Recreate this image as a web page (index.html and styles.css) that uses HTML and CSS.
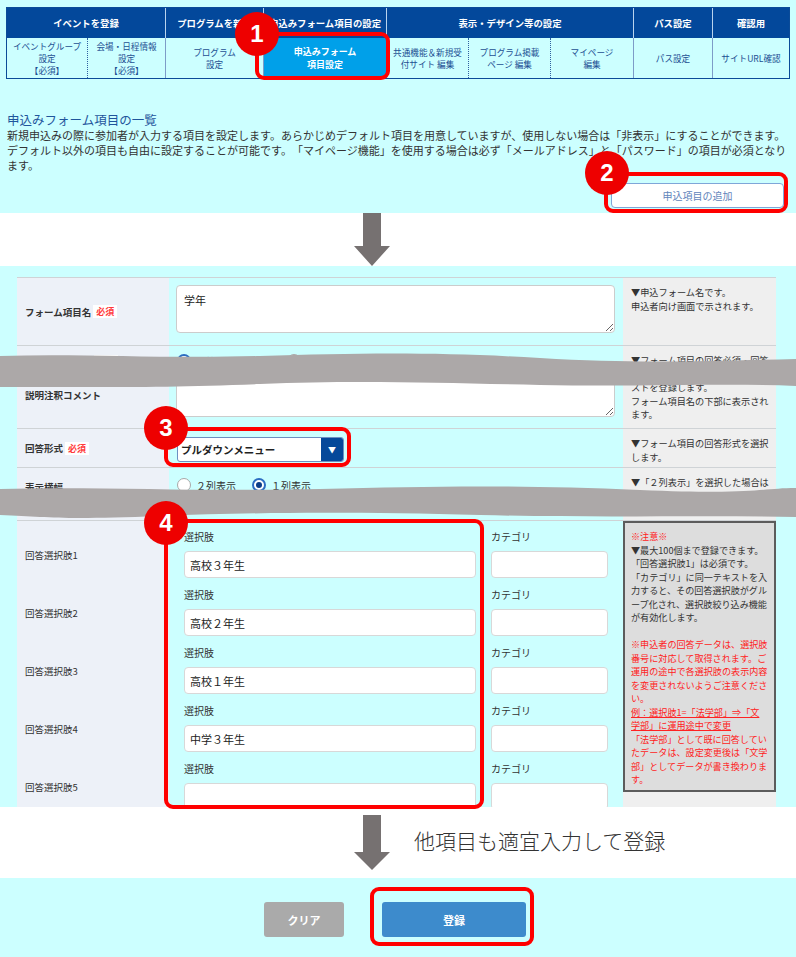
FILE: index.html
```html
<!doctype html>
<html lang="ja">
	<head>
		<meta charset="utf-8">
		<link rel="stylesheet" href="styles.css">
		<title>申込みフォーム項目の設定</title>
	</head>
	<body>
	<div class="page">

		<section class="top">
			<div class="steps">
				<div class="step-head span2">イベントを登録</div>
				<div class="step-head">プログラムを新規</div>
				<div class="step-head">申込みフォーム項目の設定</div>
				<div class="step-head span3">表示・デザイン等の設定</div>
				<div class="step-head">パス設定</div>
				<div class="step-head">確認用</div>

				<div class="step first">イベントグループ<br>設定<br>【必須】</div>
				<div class="step">会場・日程情報<br>設定<br>【必須】</div>
				<div class="step group">プログラム<br>設定</div>
				<div class="step group active">申込みフォーム<br>項目設定</div>
				<div class="step group">共通機能＆新規受<br>付サイト 編集</div>
				<div class="step">プログラム掲載<br>ページ 編集</div>
				<div class="step">マイページ<br>編集</div>
				<div class="step group">パス設定</div>
				<div class="step group">サイトURL確認</div>
			</div>

			<h2 class="list-title">申込みフォーム項目の一覧</h2>
			<p class="list-desc">新規申込みの際に参加者が入力する項目を設定します。あらかじめデフォルト項目を用意していますが、使用しない場合は「非表示」にすることができます。<br>デフォルト以外の項目も自由に設定することが可能です。「マイページ機能」を使用する場合は必ず「メールアドレス」と「パスワード」の項目が必須となります。</p>
			<div class="add-row"><button class="btn-add">申込項目の追加</button></div>
		</section>

		<div class="arrow-band">
			<svg class="arrow" width="36" height="53" viewBox="0 0 36 53"><path d="M9 0H27V33H36L18 53L0 33H9Z" fill="#767171"/></svg>
		</div>

		<section class="form-area">
			<div class="form-table">

				<div class="row row-name">
					<div class="cell-label">フォーム項目名<span class="req">必須</span></div>
					<div class="cell-input pad-name"><textarea class="ta ta-name">学年</textarea></div>
					<div class="cell-help">▼申込フォーム名です。<br>申込者向け画面で示されます。</div>
				</div>

				<div class="row row-comment">
					<div class="cell-label label-stack">
						<div class="label-line">回答の必須設定<span class="req">必須</span></div>
						<div class="label-line label-second">説明注釈コメント</div>
					</div>
					<div class="cell-input pad-comment">
						<div class="radios">
							<span class="radio-item wide"><span class="radio on"></span>回答必須</span>
							<span class="radio-item"><span class="radio"></span>回答任意</span>
						</div>
						<textarea class="ta ta-comment"></textarea>
					</div>
					<div class="cell-help">▼フォーム項目の回答必須・回答<br>任意を選択します。説明注釈テキ<br>ストを登録します。<br>フォーム項目名の下部に表示され<br>ます。</div>
				</div>

				<div class="row row-type">
					<div class="cell-label">回答形式<span class="req">必須</span></div>
					<div class="cell-input pad-type">
						<div class="select"><span class="select-text">プルダウンメニュー</span><span class="select-arrow">▼</span></div>
					</div>
					<div class="cell-help">▼フォーム項目の回答形式を選択<br>します。</div>
				</div>

				<div class="row row-width">
					<div class="cell-label label-top">表示横幅</div>
					<div class="cell-input pad-width">
						<div class="radios">
							<span class="radio-item"><span class="radio"></span>２列表示</span>
							<span class="radio-item"><span class="radio on"></span>１列表示</span>
						</div>
					</div>
					<div class="cell-help">▼「２列表示」を選択した場合は<br>横に並べて表示されます。</div>
				</div>

				<div class="row row-choices">
					<div class="cell-label choice-labels">
						<div class="choice-label">回答選択肢1</div>
						<div class="choice-label">回答選択肢2</div>
						<div class="choice-label">回答選択肢3</div>
						<div class="choice-label">回答選択肢4</div>
						<div class="choice-label">回答選択肢5</div>
					</div>
					<div class="cell-input choices">
						<div class="choice">
							<div><div class="field-label">選択肢</div><input class="txt" type="text" value="高校３年生"></div>
							<div><div class="field-label">カテゴリ</div><input class="txt" type="text" value=""></div>
						</div>
						<div class="choice">
							<div><div class="field-label">選択肢</div><input class="txt" type="text" value="高校２年生"></div>
							<div><div class="field-label">カテゴリ</div><input class="txt" type="text" value=""></div>
						</div>
						<div class="choice">
							<div><div class="field-label">選択肢</div><input class="txt" type="text" value="高校１年生"></div>
							<div><div class="field-label">カテゴリ</div><input class="txt" type="text" value=""></div>
						</div>
						<div class="choice">
							<div><div class="field-label">選択肢</div><input class="txt" type="text" value="中学３年生"></div>
							<div><div class="field-label">カテゴリ</div><input class="txt" type="text" value=""></div>
						</div>
						<div class="choice">
							<div><div class="field-label">選択肢</div><input class="txt" type="text" value=""></div>
							<div><div class="field-label">カテゴリ</div><input class="txt" type="text" value=""></div>
						</div>
					</div>
					<div class="cell-help help-notice">
						<div class="notice"><span class="red">※注意※</span><br>▼最大100個まで登録できます。<br>「回答選択肢1」は必須です。<br>「カテゴリ」に同一テキストを入<br>力すると、その回答選択肢がグル<br>ープ化され、選択肢絞り込み機能<br>が有効化します。<br><br><span class="red">※申込者の回答データは、選択肢<br>番号に対応して取得されます。ご<br>運用の途中で各選択肢の表示内容<br>を変更されないようご注意くださ<br>い。<br><u>例：選択肢1=「法学部」⇒「文<br>学部」に運用途中で変更</u><br>「法学部」として既に回答してい<br>たデータは、設定変更後は「文学<br>部」としてデータが書き換わりま<br>す。</span></div>
					</div>
				</div>

			</div>
		</section>

		<div class="next-band">
			<svg class="arrow" width="36" height="55" viewBox="0 0 36 55"><path d="M9 0H27V37H36L18 55L0 37H9Z" fill="#767171"/></svg>
			<span class="next-text">他項目も適宜入力して登録</span>
		</div>

		<section class="actions">
			<button class="btn btn-clear">クリア</button>
			<button class="btn btn-submit">登録</button>
		</section>

		<!-- 省略を表す波線 -->
		<svg class="wave wave-1" width="796" height="40" viewBox="0 0 796 40"><path d="M0 6C80 3 160 9 260 6S440 2 540 8S700 11 796 9L796 36C720 33 640 37 540 35S360 30 260 34S90 37 0 37Z" fill="#aca8a8"/></svg>
		<svg class="wave wave-2" width="796" height="40" viewBox="0 0 796 40"><path d="M0 7C90 4 200 10 320 7S520 3 640 8S760 6 796 6L796 35C700 33 600 36 480 33S260 30 160 34S50 35 0 33Z" fill="#aca8a8"/></svg>

		<!-- 注釈の枠と番号 -->
		<div class="mark mark-1"></div>
		<div class="mark mark-2"></div>
		<div class="mark mark-3"></div>
		<div class="mark mark-4"></div>
		<div class="mark mark-5"></div>
		<div class="badge badge-1">1</div>
		<div class="badge badge-2">2</div>
		<div class="badge badge-3">3</div>
		<div class="badge badge-4">4</div>

	</div>
	</body>
</html>
```

FILE: styles.css
```css
* {
	box-sizing: border-box;
}

body {
	background: #fff;
	color: #333;
	font-family: "Noto Sans CJK JP", "Noto Sans", sans-serif;
	margin: 0;
	text-spacing-trim: space-all;
}

.page {
	position: relative;
	width: 796px;
}

/* 上部：ステップナビと説明 */
.top {
	background: #ccffff;
	padding: 7px 6px 5px 6px;
}

.steps {
	border: 1px solid #0b4b98;
	display: grid;
	grid-template-columns: 80px 78px 98px 123px 82px 82px 83px 79px 77px;
	grid-template-rows: 30px 40px;
}

.step-head {
	align-items: center;
	background: #03489b;
	border-left: 1px solid #b9d3ee;
	color: #fff;
	display: flex;
	font-size: 9.4px;
	font-weight: bold;
	justify-content: center;
	white-space: nowrap;
}

.step-head:first-child {
	border-left: 0;
}

.span2 {
	grid-column: span 2;
}

.span3 {
	grid-column: span 3;
}

.step {
	align-items: center;
	border-left: 1px dotted #2f5f9f;
	color: #1d4f93;
	display: flex;
	font-size: 8.6px;
	justify-content: center;
	line-height: 12px;
	text-align: center;
}

.step.first {
	border-left: 0;
}

.step.group {
	border-left: 1px solid #7d9cc8;
}

.step.active {
	background: #00a0e9;
	color: #fff;
	font-size: 9px;
	font-weight: bold;
	line-height: 13px;
}

.list-title {
	color: #1f559c;
	font-size: 12.5px;
	font-weight: normal;
	line-height: 16px;
	margin: 33px 0 0 1px;
}

.list-desc {
	font-size: 11px;
	line-height: 15px;
	margin: 0 0 0 1px;
}

.add-row {
	display: flex;
	justify-content: flex-end;
	margin-top: 10px;
	padding-right: 6px;
}

.btn-add {
	background: #fff;
	border: 1px solid #7fa6d8;
	border-radius: 4px;
	color: #5f84bb;
	font-family: "Noto Sans CJK JP", sans-serif;
	font-size: 10px;
	height: 25px;
	width: 173px;
}

/* 矢印の帯 */
.arrow-band {
	height: 53px;
	padding-left: 354px;
}

.arrow {
	display: block;
}

.next-band {
	align-items: center;
	display: flex;
	gap: 24px;
	height: 71px;
	padding-left: 354px;
}

.next-text {
	color: #333;
	font-size: 21px;
	font-weight: 300;
	margin-bottom: 6px;
}

/* フォーム項目 */
.form-area {
	background: #ccffff;
	height: 541px;
	overflow: hidden;
	padding: 11px 0 0 17px;
}

.form-table {
	width: 759px;
}

.row {
	border-top: 1px solid #cfd3d6;
	display: grid;
	grid-template-columns: 152px 454px 153px;
}

.row-name {
	height: 68px;
}

.row-comment {
	height: 83px;
}

.row-type {
	height: 39px;
}

.row-width {
	height: 53px;
}

.cell-label {
	align-items: center;
	background: #edf1f8;
	color: #333;
	display: flex;
	font-size: 9.5px;
	font-weight: bold;
	padding-left: 8px;
}

.label-stack {
	align-items: flex-start;
	flex-direction: column;
	padding-top: 7px;
}

.label-line {
	align-items: center;
	display: flex;
	line-height: 16px;
}

.label-second {
	margin-top: 18px;
}

.label-top {
	align-items: flex-start;
	line-height: 16px;
	padding-top: 11px;
}

.req {
	background: #fff;
	color: #ff3b3b;
	font-size: 9px;
	line-height: 13px;
	margin-left: 2px;
	padding: 0 3px;
}

.cell-help {
	background: #efefef;
	color: #333;
	font-size: 9.2px;
	line-height: 13.5px;
	padding: 8px 4px 0 8px;
	white-space: nowrap;
}

.pad-name {
	padding: 7px 0 0 7px;
}

.pad-comment {
	padding: 7px 0 0 8px;
}

.pad-type {
	padding: 8px 0 0 8px;
}

.pad-width {
	padding: 9px 0 0 8px;
}

.ta {
	background: #fff;
	border: 1px solid #cccccc;
	border-radius: 4px;
	color: #222;
	display: block;
	font-family: "Noto Sans CJK JP", sans-serif;
	font-size: 11px;
	line-height: 14px;
	margin: 0;
	padding: 7px 7px;
	width: 439px;
}

.ta-name {
	height: 48px;
}

.ta-comment {
	height: 39px;
	margin: 9px 0 0 -1px;
}

.radios {
	align-items: center;
	display: flex;
	font-size: 10px;
	height: 16px;
}

.radio-item {
	align-items: center;
	display: flex;
	gap: 5px;
	margin-right: 16px;
}

.radio-item.wide {
	margin-right: 51px;
}

.radio {
	background: #fff;
	border: 1px solid #a8a8a8;
	border-radius: 50%;
	height: 14px;
	width: 14px;
}

.radio.on {
	align-items: center;
	border: 2px solid #2b6dc2;
	display: flex;
	justify-content: center;
}

.radio.on::after {
	background: #0c3d87;
	border-radius: 50%;
	content: "";
	height: 6px;
	width: 6px;
}

.select {
	background: #fff;
	border: 1px solid #6d8fc2;
	border-radius: 3px;
	display: flex;
	height: 25px;
	overflow: hidden;
	width: 167px;
}

.select-text {
	color: #222;
	flex: 1;
	font-size: 10.5px;
	font-weight: bold;
	line-height: 23px;
	padding-left: 3px;
}

.select-arrow {
	align-items: center;
	background: #05489a;
	color: #fff;
	display: flex;
	font-size: 8px;
	justify-content: center;
	width: 22px;
}

/* 回答選択肢 */
.choice-labels {
	align-items: stretch;
	flex-direction: column;
	padding-top: 8px;
}

.choice-label {
	align-items: center;
	display: flex;
	flex: 0 0 58px;
	font-weight: normal;
	padding-bottom: 6px;
}

.choices {
	padding: 8px 0 0 15px;
}

.choice {
	column-gap: 15px;
	display: grid;
	grid-template-columns: 292px 117px;
	height: 58px;
}

.field-label {
	font-size: 10px;
	height: 16px;
	line-height: 16px;
	margin-bottom: 6px;
}

.txt {
	background: #fff;
	border: 1px solid #d8d8d8;
	border-radius: 4px;
	color: #222;
	display: block;
	font-family: "Noto Sans CJK JP", sans-serif;
	font-size: 11px;
	height: 27px;
	margin: 0;
	padding: 0 5px;
	width: 100%;
}

.help-notice {
	padding: 0;
}

.notice {
	background: #dddddd;
	border: 2px solid #5c5c5c;
	font-size: 9.1px;
	height: 271px;
	line-height: 13.5px;
	padding: 7px 3px 4px 6px;
}

.red {
	color: #f22;
}

/* 下部ボタン */
.actions {
	background: #ccffff;
	display: flex;
	gap: 38px;
	height: 79px;
	justify-content: center;
	padding: 24px 6px 0 0;
}

.btn {
	border: 0;
	border-radius: 3px;
	color: #fff;
	font-family: "Noto Sans CJK JP", sans-serif;
	font-size: 11px;
	font-weight: bold;
	height: 35px;
}

.btn-clear {
	background: #aaaaaa;
	width: 80px;
}

.btn-submit {
	background: #3d8bcc;
	width: 144px;
}

/* 重ね描き：波線、赤枠、番号 */
.wave {
	left: 0;
	position: absolute;
}

.wave-1 {
	top: 350px;
}

.wave-2 {
	top: 482px;
}

.mark {
	border: 4px solid #ff0000;
	border-radius: 9px;
	position: absolute;
}

.mark-1 {
	height: 48px;
	left: 255px;
	top: 32px;
	width: 135px;
}

.mark-2 {
	height: 41px;
	left: 604px;
	top: 172px;
	width: 184px;
}

.mark-3 {
	height: 40px;
	left: 164px;
	top: 427px;
	width: 187px;
}

.mark-4 {
	height: 290px;
	left: 164px;
	top: 519px;
	width: 320px;
}

.mark-5 {
	height: 59px;
	left: 370px;
	top: 887px;
	width: 164px;
}

.badge {
	align-items: center;
	background: #ee0000;
	border-radius: 50%;
	color: #fff;
	display: flex;
	font: bold 24px "Liberation Sans", Arial, sans-serif;
	height: 44px;
	justify-content: center;
	position: absolute;
	width: 44px;
}

.badge-1 {
	left: 235px;
	top: 12px;
}

.badge-2 {
	left: 585px;
	top: 151px;
}

.badge-3 {
	left: 144px;
	top: 406px;
}

.badge-4 {
	left: 144px;
	top: 501px;
}
```
